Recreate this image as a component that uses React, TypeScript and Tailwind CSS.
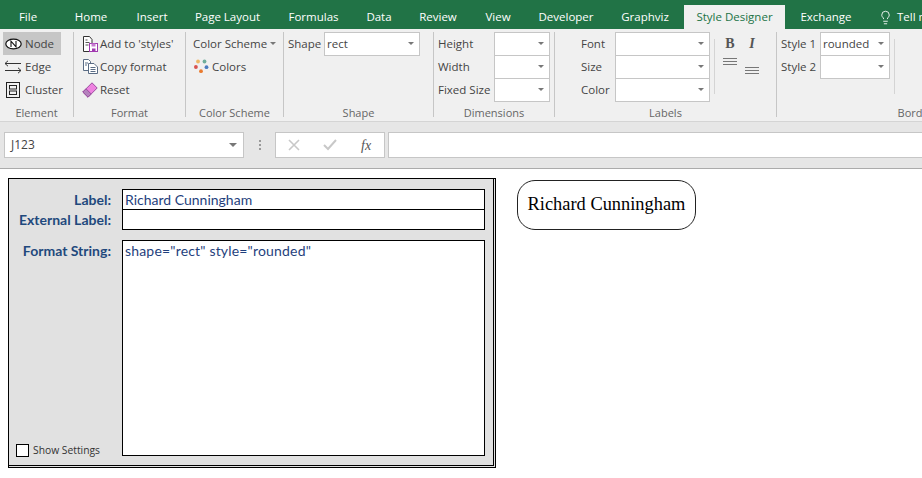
import React from "react";
import { Lightbulb } from "lucide-react";

const ui = "font-['Open_Sans','Noto_Sans',sans-serif]";

const tabs: [string, string][] = [
  ["File", "w-[56px]"],
  ["Home", "w-[70px]"],
  ["Insert", "w-[52px]"],
  ["Page Layout", "w-[99px]"],
  ["Formulas", "w-[73px]"],
  ["Data", "w-[58px]"],
  ["Review", "w-[60px]"],
  ["View", "w-[60px]"],
  ["Developer", "w-[76px]"],
  ["Graphviz", "w-[82px]"],
];

function Caret() {
  return <span className="border-x-[3px] border-t-[3px] border-x-transparent border-t-[#777]" />;
}

function Combo({ w, text = "" }: { w: string; text?: string }) {
  return (
    <div className={`${w} h-[24px] shrink-0 bg-white border border-[#c6c6c6] flex items-center justify-between pl-[2px] pr-[5px] text-[11.5px] text-[#444]`}>
      <span>{text}</span>
      <Caret />
    </div>
  );
}

function Group({ w, caption, border = true, children }: { w: string; caption: string; border?: boolean; children: React.ReactNode }) {
  return (
    <div className={`${w} shrink-0 flex flex-col h-[85px] mt-[3px] ${border ? "border-r border-[#c6c6c6]" : ""}`}>
      <div className="h-[75px] relative flex">{children}</div>
      <div className="h-[10px] flex items-center justify-center text-[11px] leading-none text-[#666]">{caption}</div>
    </div>
  );
}

function Row({ icon, label, active = false, gap }: { icon: React.ReactNode; label: string; active?: boolean; gap: string }) {
  return (
    <div className={`h-[23px] flex items-center whitespace-nowrap text-[11.5px] text-[#444] ${active ? "bg-[#c6c6c6]" : ""}`}>
      <span className={`w-[20px] h-[20px] shrink-0 flex items-center justify-center ${gap}`}>{icon}</span>
      <span>{label}</span>
    </div>
  );
}

const NodeIcon = () => (
  <svg width="17" height="12" viewBox="0 0 17 12">
    <ellipse cx="8.5" cy="6" rx="7.7" ry="4.8" fill="#fff" stroke="#111" strokeWidth="1.2" />
    <path d="M6 9V3.2l5 5.6V3" fill="none" stroke="#111" strokeWidth="1.1" />
  </svg>
);
const EdgeIcon = () => (
  <svg width="18" height="14" viewBox="0 0 18 14" fill="none" stroke="#333" strokeWidth="1">
    <path d="M1 3.5h16M4 .8 1 3.5 4 6.2" />
    <path d="M1 10.5h16M14 7.8l3 2.7-3 2.7" />
  </svg>
);
const ClusterIcon = () => (
  <svg width="14" height="16" viewBox="0 0 14 16" fill="none" stroke="#222" strokeWidth="1">
    <rect x=".5" y=".5" width="13" height="15" />
    <rect x="3.5" y="3.5" width="7" height="3.5" />
    <rect x="3.5" y="9" width="7" height="3.5" />
  </svg>
);
const AddIcon = () => (
  <svg width="15" height="16" viewBox="0 0 15 16" fill="none">
    <path d="M.5.5h6l2.5 3v12H.5z" fill="#fff" stroke="#333" />
    <path d="M2.5 4h2M2.5 6.5h4M2.5 9h3" stroke="#555" />
    <rect x="6.5" y="7.5" width="8" height="8" fill="#fff" stroke="#a13ab0" />
    <rect x="8.5" y="7.5" width="4" height="3" fill="#c77dd0" />
    <rect x="9" y="12.5" width="3.5" height="3" fill="#a13ab0" />
  </svg>
);
const CopyIcon = () => (
  <svg width="15" height="15" viewBox="0 0 15 15" fill="none" stroke="#5a6c85">
    <path d="M.5.5h5l2 2v9h-7z" fill="#fff" />
    <path d="M5.5 4.5h5.5l3.5 3.5v6.5h-9z" fill="#fff" />
    <path d="M2 4h3M2 6h2M7.5 8.5h5M7.5 10.5h5M7.5 12.5h5" />
  </svg>
);
const EraserIcon = () => (
  <svg width="16" height="16" viewBox="0 0 16 16">
    <path d="M10 .8 15.2 6 6 15.2.8 10z" fill="#ee82e0" stroke="#9a4fa0" />
    <path d="M4 6.8 9.2 12 6 15.2.8 10z" fill="#b583bd" stroke="#9a4fa0" />
  </svg>
);
const ColorsIcon = () => (
  <svg width="15" height="15" viewBox="0 0 15 15">
    <circle cx="4" cy="2.5" r="1.9" fill="#eeb765" />
    <circle cx="10.5" cy="2.5" r="1.9" fill="#6fae9c" />
    <circle cx="1.9" cy="8" r="1.9" fill="#d9534f" />
    <circle cx="12.5" cy="8.2" r="1.9" fill="#4a7cc0" />
    <circle cx="7" cy="12.2" r="1.9" fill="#ea7b2f" />
  </svg>
);
const AlignIcon = () => (
  <svg width="14" height="8" viewBox="0 0 14 8" stroke="#777" strokeWidth="1">
    <path d="M0 .5h14M0 3.5h14M0 6.5h14" />
  </svg>
);

function Field({ label, w }: { label: string; w: string }) {
  return (
    <div className="h-[23px] flex items-center justify-between whitespace-nowrap text-[11.5px] text-[#444]">
      <span>{label}</span>
      <Combo w={w} />
    </div>
  );
}

const calibri = "font-['Lato','Noto_Sans',sans-serif]";

export default function App() {
  return (
    <div className={`w-[922px] h-[478px] overflow-hidden bg-white ${ui}`}>
      {/* Tabs */}
      <div className="h-[29px] bg-[#217346] flex text-[11.5px] text-white">
        {tabs.map(([t, w]) => (
          <div key={t} className={`${w} shrink-0 flex items-center justify-center pt-[5px]`}>{t}</div>
        ))}
        <div className="mt-[5px] ml-[-2px] w-[101px] shrink-0 bg-[#f0f0f0] text-[#217346] flex items-center justify-center">Style Designer</div>
        <div className="w-[82px] shrink-0 flex items-center justify-center pt-[5px]">Exchange</div>
        <div className="flex items-center pt-[5px] gap-[4px] whitespace-nowrap pl-[11px]">
          <Lightbulb size={15} strokeWidth={1.4} />
          <span>Tell me</span>
        </div>
      </div>

      {/* Ribbon */}
      <div className="h-[93px] bg-[#f0f0f0] border-b border-[#d4d4d4] flex">
        <Group w="w-[74px]" caption="Element">
          <div className="ml-[3px] w-[58px]">
            <Row gap="mr-[2px]" icon={<NodeIcon />} label="Node" active />
            <Row gap="mr-[2px]" icon={<EdgeIcon />} label="Edge" />
            <Row gap="mr-[2px]" icon={<ClusterIcon />} label="Cluster" />
          </div>
        </Group>
        <Group w="w-[112px]" caption="Format">
          <div className="ml-[6px]">
            <Row gap="mr-0" icon={<AddIcon />} label="Add to 'styles'" />
            <Row gap="mr-0" icon={<CopyIcon />} label="Copy format" />
            <Row gap="mr-0" icon={<EraserIcon />} label="Reset" />
          </div>
        </Group>
        <Group w="w-[98px]" caption="Color Scheme">
          <div className="ml-[7px] text-[11.5px] text-[#444] whitespace-nowrap">
            <div className="h-[23px] flex items-center gap-[3px]">
              <span>Color Scheme</span>
              <Caret />
            </div>
            <div className="h-[23px] flex items-center gap-[3px] pl-px">
              <ColorsIcon />
              <span>Colors</span>
            </div>
          </div>
        </Group>
        <Group w="w-[150px]" caption="Shape">
          <div className="ml-[4px] w-[132px] h-[23px] flex items-center justify-between text-[11.5px] text-[#444]">
            <span>Shape</span>
            <Combo w="w-[96px]" text="rect" />
          </div>
        </Group>
        <Group w="w-[121px]" caption="Dimensions">
          <div className="ml-[4px] w-[112px]">
            <Field label="Height" w="w-[56px]" />
            <Field label="Width" w="w-[56px]" />
            <Field label="Fixed Size" w="w-[56px]" />
          </div>
        </Group>
        <Group w="w-[222px]" caption="Labels">
          <div className="ml-[26px] w-[129px]">
            <Field label="Font" w="w-[95px]" />
            <Field label="Size" w="w-[95px]" />
            <Field label="Color" w="w-[95px]" />
          </div>
          <div className="ml-[4px] mt-[7px] h-[55px] border-l border-[#d4d4d4] pl-[8px] flex gap-[8px]">
            <div className="flex flex-col items-center w-[14px]">
              <span className="font-['Liberation_Serif',serif] font-bold text-[14px] leading-[16px] text-[#555] mt-[-3px]">B</span>
              <span className="mt-[6px] h-[8px] flex"><AlignIcon /></span>
            </div>
            <div className="flex flex-col items-center w-[14px]">
              <span className="font-['Liberation_Serif',serif] italic font-bold text-[14px] leading-[16px] text-[#555] mt-[-3px]">I</span>
              <span className="mt-[15px] h-[8px] flex"><AlignIcon /></span>
            </div>
          </div>
        </Group>
        <Group w="w-[282px]" caption="Borders" border={false}>
          <div className="ml-[4px] w-[109px]">
            <div className="h-[23px] flex items-center justify-between text-[11.5px] text-[#444]">
              <span>Style 1</span>
              <Combo w="w-[70px]" text="rounded" />
            </div>
            <div className="h-[23px] flex items-center justify-between text-[11.5px] text-[#444]">
              <span>Style 2</span>
              <Combo w="w-[70px]" />
            </div>
          </div>
          <div className="ml-[4px] mt-[7px] h-[55px] border-l border-[#d4d4d4]" />
        </Group>
      </div>

      {/* Formula bar */}
      <div className="h-[47px] bg-[#e6e6e6] border-b border-[#ababab] flex pt-[10px] pl-[4px] text-[12px]">
        <div className="w-[240px] h-[26px] shrink-0 bg-white border border-[#c6c6c6] flex items-center justify-between pl-[6px] pr-[6px] text-[#444]">
          <span>J123</span>
          <span className="border-x-[4px] border-t-[4px] border-x-transparent border-t-[#777]" />
        </div>
        <div className="w-[31px] h-[26px] shrink-0 flex flex-col items-center justify-center gap-[2px]">
          <span className="w-[2px] h-[2px] bg-[#999]" />
          <span className="w-[2px] h-[2px] bg-[#999]" />
          <span className="w-[2px] h-[2px] bg-[#999]" />
        </div>
        <div className="w-[110px] h-[26px] shrink-0 bg-white border border-[#c6c6c6] flex items-center">
          <span className="w-[37px] flex justify-center">
            <svg width="12" height="12" viewBox="0 0 12 12" fill="none" stroke="#c8c8c8" strokeWidth="1.6"><path d="M1 1l10 10M11 1 1 11" /></svg>
          </span>
          <span className="w-[36px] flex justify-center">
            <svg width="14" height="12" viewBox="0 0 14 12" fill="none" stroke="#c8c8c8" strokeWidth="2"><path d="M1 6l4 4 8-9" /></svg>
          </span>
          <span className="w-[36px] text-center font-['Liberation_Serif',serif] italic text-[14px] text-[#555]">fx</span>
        </div>
        <div className="ml-[3px] w-[560px] shrink-0 h-[26px] bg-white border border-[#c6c6c6]" />
      </div>

      {/* Sheet */}
      <div className="flex pl-[8px] pt-[9px] items-start">
        <div className={`w-[488px] h-[290px] shrink-0 bg-[#e1e1e1] border-double border-black border-t border-l border-r-[3px] border-b-[3px] flex pt-[10px] pb-[9px] ${calibri}`}>
          <div className="w-[113px] shrink-0 flex flex-col items-stretch pt-px pr-[11px] text-right text-[14px] font-bold text-[#1f497d]">
            <div className="h-[20px] leading-[20px]">Label:</div>
            <div className="h-[20px] leading-[20px]">External Label:</div>
            <div className="mt-[11px] h-[20px] leading-[20px]">Format String:</div>
            <div className="mt-auto mb-[-2px] flex items-center pl-[7px] gap-[4px] text-left font-normal text-[#333]">
              <span className="w-[13px] h-[13px] bg-white border border-black shrink-0" />
              <span className={`${ui} text-[10.3px] whitespace-nowrap`}>Show Settings</span>
            </div>
          </div>
          <div className="w-[363px] shrink-0 flex flex-col text-[14px] text-[#1f3f7d]">
            <div className="h-[21px] bg-white border border-black pl-[2px] leading-[19px]">Richard Cunningham</div>
            <div className="h-[20px] bg-white border border-black border-t-0" />
            <div className="mt-[10px] flex-1 bg-white border border-black pl-[2px] leading-[19px] tracking-[0.18px]">shape="rect" style="rounded"</div>
          </div>
        </div>
        <div className="ml-[21px] mt-[2px] w-[179px] h-[50px] border-[1.5px] border-[#222] rounded-[18px] flex items-center justify-center font-['Liberation_Serif',serif] text-[18.4px] text-black whitespace-nowrap">
          Richard Cunningham
        </div>
      </div>
    </div>
  );
}
